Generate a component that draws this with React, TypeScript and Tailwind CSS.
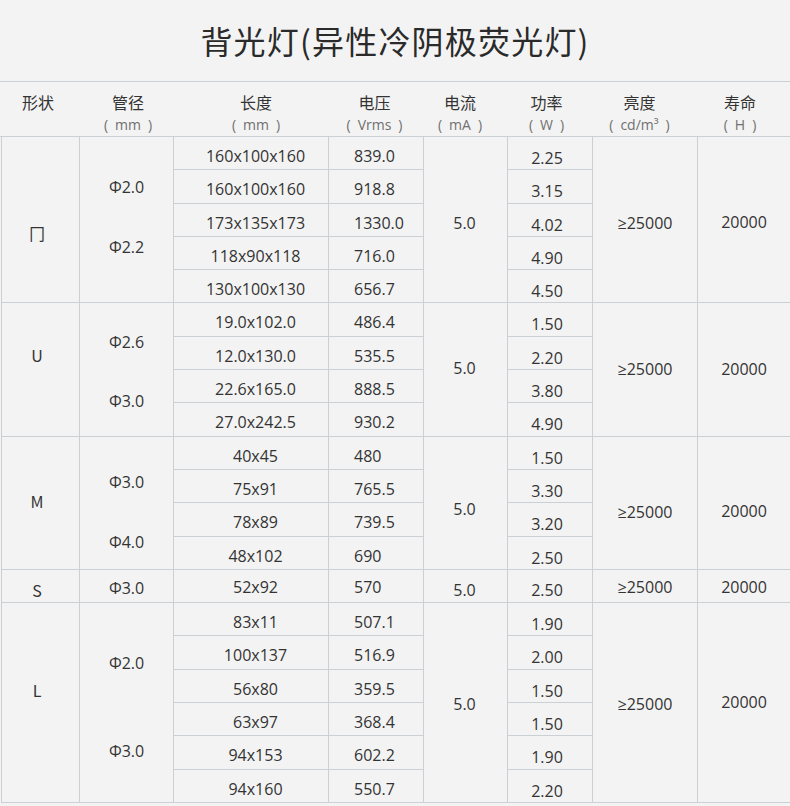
import React from 'react';

type Group = {
  shape: string;
  shapePad: string;
  diams: string[];
  diamPad: string;
  diamGap: string;
  lengths: string[];
  volts: string[];
  powers: string[];
  currentPad: string;
  lumPad: string;
  lifePad: string;
  rowPad?: string;
  powerPad?: string;
};

const groups: Group[] = [
  {
    shape: '冂',
    shapePad: 'pt-[85px]',
    diams: ['Φ2.0', 'Φ2.2'],
    diamPad: 'pt-[39px]',
    diamGap: 'gap-[38px]',
    lengths: ['160x100x160', '160x100x160', '173x135x173', '118x90x118', '130x100x130'],
    volts: ['839.0', '918.8', '1330.0', '716.0', '656.7'],
    powers: ['2.25', '3.15', '4.02', '4.90', '4.50'],
    currentPad: 'pt-[75px]',
    lumPad: 'pt-[75px]',
    lifePad: 'pt-[74px]'
  },
  {
    shape: 'U',
    shapePad: 'pt-[41px]',
    diams: ['Φ2.6', 'Φ3.0'],
    diamPad: 'pt-[28px]',
    diamGap: 'gap-[37px]',
    lengths: ['19.0x102.0', '12.0x130.0', '22.6x165.0', '27.0x242.5'],
    volts: ['486.4', '535.5', '888.5', '930.2'],
    powers: ['1.50', '2.20', '3.80', '4.90'],
    currentPad: 'pt-[54px]',
    lumPad: 'pt-[55px]',
    lifePad: 'pt-[55px]'
  },
  {
    shape: 'M',
    shapePad: 'pt-[53px]',
    diams: ['Φ3.0', 'Φ4.0'],
    diamPad: 'pt-[34px]',
    diamGap: 'gap-[38px]',
    lengths: ['40x45', '75x91', '78x89', '48x102'],
    volts: ['480', '765.5', '739.5', '690'],
    powers: ['1.50', '3.30', '3.20', '2.50'],
    currentPad: 'pt-[61px]',
    lumPad: 'pt-[64px]',
    lifePad: 'pt-[63px]'
  },
  {
    shape: 'S',
    shapePad: 'pt-[9px]',
    diams: ['Φ3.0'],
    diamPad: 'pt-[7px]',
    diamGap: 'gap-0',
    lengths: ['52x92'],
    volts: ['570'],
    powers: ['2.50'],
    currentPad: 'pt-[9px]',
    lumPad: 'pt-[6px]',
    lifePad: 'pt-[6px]',
    rowPad: 'pt-[6px]',
    powerPad: 'pt-[9px]'
  },
  {
    shape: 'L',
    shapePad: 'pt-[76px]',
    diams: ['Φ2.0', 'Φ3.0'],
    diamPad: 'pt-[49px]',
    diamGap: 'gap-[66px]',
    lengths: ['83x11', '100x137', '56x80', '63x97', '94x153', '94x160'],
    volts: ['507.1', '516.9', '359.5', '368.4', '602.2', '550.7'],
    powers: ['1.90', '2.00', '1.50', '1.50', '1.90', '2.20'],
    currentPad: 'pt-[90px]',
    lumPad: 'pt-[90px]',
    lifePad: 'pt-[88px]'
  }
];

const spans: Record<number, string> = {
  1: 'row-span-1',
  4: 'row-span-4',
  5: 'row-span-5',
  6: 'row-span-6'
};

// en spaces inside the brackets, like the original
const headers = [
  { label: '形状', unit: '', shift: 'pr-[6px]' },
  { label: '管径', unit: '(\u2002mm\u2002)', shift: 'pl-[2px]' },
  { label: '长度', unit: '(\u2002mm\u2002)', shift: 'pl-[9px]' },
  { label: '电压', unit: '(\u2002Vrms\u2002)', shift: 'pr-[4px]' },
  { label: '电流', unit: '(\u2002mA\u2002)', shift: 'pr-[12px]' },
  { label: '功率', unit: '(\u2002W\u2002)', shift: 'pr-[8px]' },
  { label: '亮度', unit: '(\u2002cd/m³\u2002)', shift: 'pr-[12px]' },
  { label: '寿命', unit: '(\u2002H\u2002)', shift: 'pr-[8px]' }
];

const cols = 'grid-cols-[78px_94px_155px_95px_84px_85px_105px_92px]';
const cell = 'border-r border-b border-[#cbd0d4] flex leading-[22px]';

export default function App() {
  return (
    <div className="w-[790px] h-[806px] bg-[#f3f3f3] text-[#333] overflow-hidden" style={{ fontFamily: '"Open Sans", "Noto Sans CJK SC", sans-serif' }}>
      <div className="h-[81px] flex items-center justify-center pb-[1px]">
        <h1 className="text-[32px] text-[#2a2a2a] font-normal tracking-[1.2px]" style={{ fontFamily: '"Noto Sans CJK SC", sans-serif' }}>
          背光灯(异性冷阴极荧光灯)
        </h1>
      </div>

      {/* header row */}
      <div className="h-[56px] border-t border-b border-[#cbd0d4] pl-[2px]">
        <div className={`grid ${cols} h-full`}>
          {headers.map(h => (
            <div key={h.label} className={`flex flex-col items-center pt-[9px] ${h.shift}`}>
              <span className="text-[16px] leading-[22px] text-[#333]" style={{ fontFamily: '"Noto Sans CJK SC", sans-serif' }}>{h.label}</span>
              {h.unit && <span className="text-[14px] leading-[20px] mt-[2px] text-[#707070] whitespace-pre">{h.unit}</span>}
            </div>
          ))}
        </div>
      </div>

      {/* body */}
      <div className={`ml-px border-l border-[#cbd0d4] grid ${cols} grid-rows-[repeat(20,33.3px)] text-[16px]`}>
        {groups.map(g => {
          const n = g.lengths.length;
          const rp = g.rowPad ?? 'pt-[8px]';
          const pp = g.powerPad ?? 'pt-[10px]';
          return g.lengths.map((len, i) => (
            <React.Fragment key={g.shape + i}>
              {i === 0 && (
                <div className={`${cell} ${spans[n]} justify-center pr-[7px] ${g.shapePad}`} style={{ fontFamily: '"Noto Sans CJK SC", sans-serif' }}>
                  {g.shape}
                </div>
              )}
              {i === 0 && (
                <div className={`${cell} ${spans[n]} flex-col items-center ${g.diamPad} ${g.diamGap}`}>
                  {g.diams.map(d => <span key={d}>{d}</span>)}
                </div>
              )}
              <div className={`${cell} justify-center pl-[9px] ${rp}`}>{len}</div>
              <div className={`${cell} justify-start pl-[25px] ${rp}`}>{g.volts[i]}</div>
              {i === 0 && (
                <div className={`${cell} ${spans[n]} justify-center pr-[2px] ${g.currentPad}`}>5.0</div>
              )}
              <div className={`${cell} justify-center pr-[6px] ${pp}`}>{g.powers[i]}</div>
              {i === 0 && (
                <div className={`${cell} ${spans[n]} justify-center ${g.lumPad}`}>≥25000</div>
              )}
              {i === 0 && (
                <div className={`border-b border-[#cbd0d4] flex leading-[22px] ${spans[n]} justify-center ${g.lifePad}`}>20000</div>
              )}
            </React.Fragment>
          ));
        })}
      </div>
    </div>
  );
}
